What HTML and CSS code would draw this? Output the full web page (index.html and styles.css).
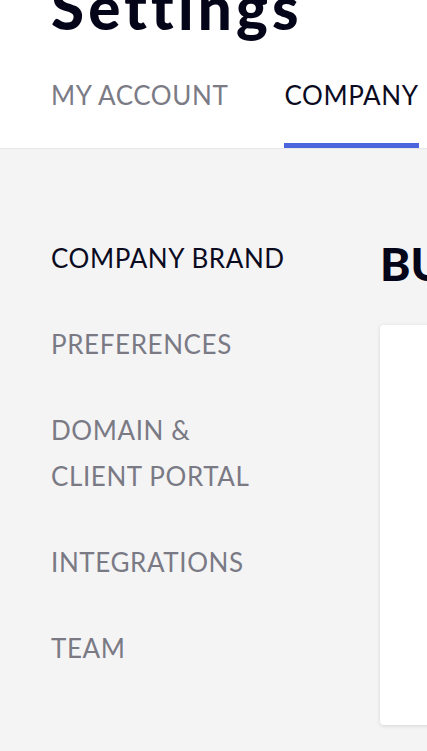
FILE: index.html
```html
<!DOCTYPE html>
<html>
<head>
<meta charset="utf-8">
<link rel="stylesheet" href="styles.css">
</head>
<body>
<header class="top">
  <h1 class="title">Settings</h1>
  <nav class="tabs">
    <a class="tab">MY ACCOUNT</a>
    <a class="tab active">COMPANY</a>
  </nav>
</header>
<main class="body">
  <aside class="side">
    <a class="item active">COMPANY BRAND</a>
    <a class="item">PREFERENCES</a>
    <a class="item">DOMAIN &amp;<br>CLIENT PORTAL</a>
    <a class="item">INTEGRATIONS</a>
    <a class="item">TEAM</a>
  </aside>
  <section class="content">
    <h2 class="section-title">BUSINESS INFORMATION</h2>
    <div class="card"></div>
  </section>
</main>
</body>
</html>
```
FILE: styles.css
```css
html, body {
  margin: 0;
  padding: 0;
  width: 427px;
  height: 751px;
  overflow: hidden;
  background: #f4f4f5;
  font-family: Lato, "Liberation Sans", sans-serif;
}
.top {
  background: #ffffff;
  border-bottom: 1px solid #e6e6ea;
  padding-left: 51px;
  height: 149px;
  box-sizing: border-box;
  display: flex;
  flex-direction: column;
  overflow: hidden;
}
.title {
  margin: -26px 0 0 0;
  font-size: 60px;
  line-height: 66px;
  font-weight: 900;
  color: #050519;
  letter-spacing: 4.2px;
}
.tabs {
  display: flex;
  gap: 56px;
  margin-top: 40px;
  white-space: nowrap;
}
.tab {
  font-size: 26px;
  line-height: 31px;
  color: #7b7b86;
  padding-bottom: 32px;
  border-bottom: 5px solid transparent;
  letter-spacing: 0.6px;
}
.tab.active {
  color: #0b0b1f;
  border-bottom-color: #4c64dc;
}
.body {
  display: flex;
  padding-top: 86px;
}
.side {
  display: flex;
  flex-direction: column;
  gap: 40px;
  padding-left: 51px;
  width: 329px;
  flex: none;
}
.item {
  font-size: 26px;
  line-height: 46px;
  color: #7a7a85;
  letter-spacing: 0.6px;
  white-space: nowrap;
}
.item.active {
  color: #0b0b1f;
}
.content {
  flex: none;
  width: 400px;
  white-space: nowrap;
}
.section-title {
  margin: 0;
  font-size: 46px;
  line-height: 58px;
  font-weight: 900;
  color: #050519;
}
.card {
  margin-top: 32px;
  background: #ffffff;
  height: 400px;
  border-radius: 4px;
  box-shadow: 0 1px 4px rgba(0,0,0,0.12);
}
```
